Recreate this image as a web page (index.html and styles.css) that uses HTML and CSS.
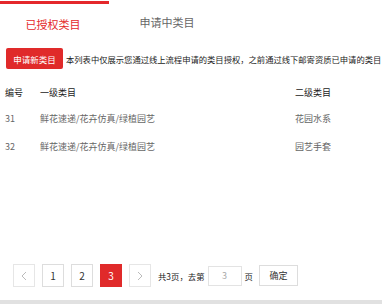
FILE: index.html
```html
<!DOCTYPE html>
<html lang="zh-CN">
<head>
  <meta charset="UTF-8">
  <title>已授权类目</title>
  <link rel="stylesheet" href="styles.css">
</head>
<body>
  <div class="page">
    <div class="tabs">
      <div class="tab active">已授权类目</div>
      <div class="tab">申请中类目</div>
    </div>

    <div class="toolbar">
      <button class="btn-apply">申请新类目</button>
      <span class="tip">本列表中仅展示您通过线上流程申请的类目授权，之前通过线下邮寄资质已申请的类目</span>
    </div>

    <table class="cats">
      <thead>
        <tr><th class="c-no">编号</th><th class="c-one">一级类目</th><th>二级类目</th></tr>
      </thead>
      <tbody>
        <tr><td>31</td><td>鲜花速递/花卉仿真/绿植园艺</td><td>花园水系</td></tr>
        <tr><td>32</td><td>鲜花速递/花卉仿真/绿植园艺</td><td>园艺手套</td></tr>
      </tbody>
    </table>

    <div class="pager">
      <span class="pg arrow"><svg width="6" height="10" viewBox="0 0 6 10"><path d="M5 1 L1 5 L5 9" fill="none" stroke="#bbb" stroke-width="1"/></svg></span>
      <span class="pg">1</span>
      <span class="pg">2</span>
      <span class="pg cur">3</span>
      <span class="pg arrow"><svg width="6" height="10" viewBox="0 0 6 10"><path d="M1 1 L5 5 L1 9" fill="none" stroke="#bbb" stroke-width="1"/></svg></span>
      <span class="pg-text">共3页，去第</span>
      <input class="pg-input" type="text" value="3">
      <span class="pg-text">页</span>
      <button class="pg-ok">确定</button>
    </div>
  </div>
  <div class="bottom"></div>
</body>
</html>
```

FILE: styles.css
```css
body { margin: 0; font-family: "Noto Sans CJK SC", "Noto Sans", sans-serif; background: #fff; color: #333; width: 382px; height: 304px; overflow: hidden; }
.page { height: 300px; }
.tabs { display: flex; height: 40px; }
.tab { width: 106px; text-align: center; font-size: 11px; line-height: 14px; padding-top: 15px; color: #666; }
.tab.active { color: #e4282b; border-top: 3px solid #e4282b; padding-top: 13px; margin-top: 1px; width: 109px; padding-right: 3px; box-sizing: border-box; }
.tabs .tab:first-child { margin-right: 5px; }
.toolbar { display: flex; align-items: center; white-space: nowrap; padding-left: 6px; margin-top: 8px; overflow: hidden; }
.btn-apply { background: #e02a2a; color: #fff; border: none; border-radius: 2px; font-family: inherit; font-size: 8.5px; width: 57px; height: 21px; padding: 0; margin-right: 3px; flex: none; }
.tip { font-size: 8.3px; color: #222; }
.cats { border-collapse: collapse; margin-top: 12px; width: 382px; }
.cats th, .cats td { text-align: left; font-size: 9px; padding: 0; height: 28px; }
.cats th { color: #222; font-weight: normal; height: 23px; }
.cats td { color: #666; }
.c-no { width: 35px; padding-left: 5px !important; }
.cats td:first-child { padding-left: 5px; }
.c-one { width: 255px; }
.pager { display: flex; align-items: center; margin-top: 104px; padding-left: 13px; }
.pg { width: 20px; height: 21px; border: 1px solid #ddd; display: flex; align-items: center; justify-content: center; font-size: 10px; color: #333; margin-right: 7px; }
.pg.cur { background: #e02a2a; border-color: #e02a2a; color: #fff; }
.pg.arrow { border-color: #e6e6e6; }
.pg-text { font-size: 8.4px; color: #222; }
.pg-input { width: 32px; height: 18px; border: 1px solid #e3e3e3; text-align: center; font-size: 9px; color: #aaa; margin: 0 3px 0 3px; padding: 0; box-sizing: content-box; font-family: inherit; }
.pg-ok { margin-left: 6px; width: 39px; height: 21px; background: #fff; border: 1px solid #ddd; font-family: inherit; font-size: 9px; color: #333; padding: 0; }
.bottom { height: 4px; background: #e1e1e1; }
```
